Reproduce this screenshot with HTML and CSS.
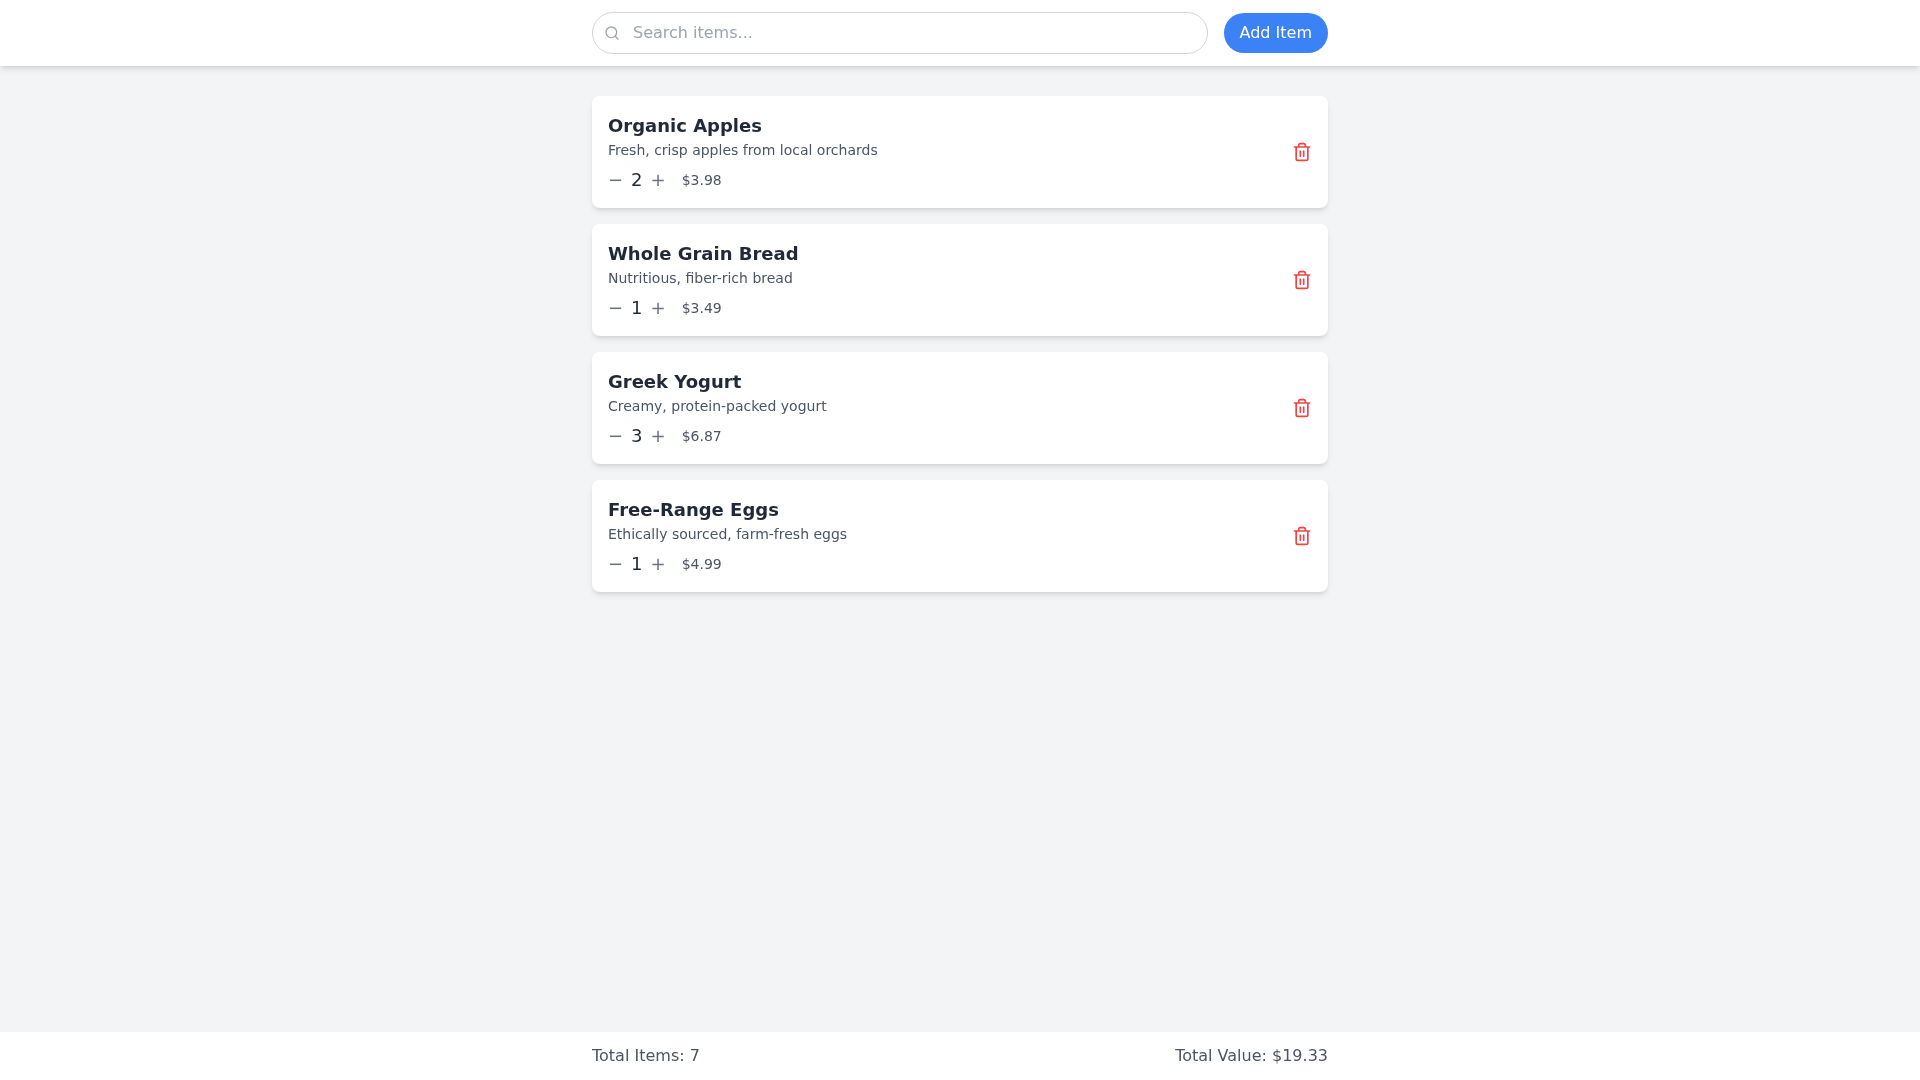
FILE: index.html
```html
<!DOCTYPE html>
<html lang="en">
<head>
    <meta charset="UTF-8">
    <meta name="viewport" content="width=device-width, initial-scale=1.0">
    <title>Inventory</title>
    <link rel="stylesheet" href="styles.css">
</head>
<body>
    <header class="top-bar">
        <div class="wrap top-bar-inner">
            <div class="search">
                <svg class="search-icon" viewBox="0 0 24 24" fill="none" stroke="currentColor" stroke-width="2" stroke-linecap="round" stroke-linejoin="round">
                    <circle cx="11" cy="11" r="8"/>
                    <path d="m21 21-4.3-4.3"/>
                </svg>
                <input class="search-input" type="text" placeholder="Search items...">
            </div>
            <button class="add-btn">Add Item</button>
        </div>
    </header>

    <main class="wrap item-list">
        <div class="item-card">
            <div class="item-info">
                <h2 class="item-name">Organic Apples</h2>
                <p class="item-desc">Fresh, crisp apples from local orchards</p>
                <div class="item-controls">
                    <button class="qty-btn">−</button>
                    <span class="qty">2</span>
                    <button class="qty-btn">+</button>
                    <span class="price">$3.98</span>
                </div>
            </div>
            <button class="delete-btn">
                <svg viewBox="0 0 24 24" fill="none" stroke="currentColor" stroke-width="2" stroke-linecap="round" stroke-linejoin="round">
                    <path d="M3 6h18M19 6v14c0 1-1 2-2 2H7c-1 0-2-1-2-2V6M8 6V4c0-1 1-2 2-2h4c1 0 2 1 2 2v2M10 11v6M14 11v6"/>
                </svg>
            </button>
        </div>

        <div class="item-card">
            <div class="item-info">
                <h2 class="item-name">Whole Grain Bread</h2>
                <p class="item-desc">Nutritious, fiber-rich bread</p>
                <div class="item-controls">
                    <button class="qty-btn">−</button>
                    <span class="qty">1</span>
                    <button class="qty-btn">+</button>
                    <span class="price">$3.49</span>
                </div>
            </div>
            <button class="delete-btn">
                <svg viewBox="0 0 24 24" fill="none" stroke="currentColor" stroke-width="2" stroke-linecap="round" stroke-linejoin="round">
                    <path d="M3 6h18M19 6v14c0 1-1 2-2 2H7c-1 0-2-1-2-2V6M8 6V4c0-1 1-2 2-2h4c1 0 2 1 2 2v2M10 11v6M14 11v6"/>
                </svg>
            </button>
        </div>

        <div class="item-card">
            <div class="item-info">
                <h2 class="item-name">Greek Yogurt</h2>
                <p class="item-desc">Creamy, protein-packed yogurt</p>
                <div class="item-controls">
                    <button class="qty-btn">−</button>
                    <span class="qty">3</span>
                    <button class="qty-btn">+</button>
                    <span class="price">$6.87</span>
                </div>
            </div>
            <button class="delete-btn">
                <svg viewBox="0 0 24 24" fill="none" stroke="currentColor" stroke-width="2" stroke-linecap="round" stroke-linejoin="round">
                    <path d="M3 6h18M19 6v14c0 1-1 2-2 2H7c-1 0-2-1-2-2V6M8 6V4c0-1 1-2 2-2h4c1 0 2 1 2 2v2M10 11v6M14 11v6"/>
                </svg>
            </button>
        </div>

        <div class="item-card">
            <div class="item-info">
                <h2 class="item-name">Free-Range Eggs</h2>
                <p class="item-desc">Ethically sourced, farm-fresh eggs</p>
                <div class="item-controls">
                    <button class="qty-btn">−</button>
                    <span class="qty">1</span>
                    <button class="qty-btn">+</button>
                    <span class="price">$4.99</span>
                </div>
            </div>
            <button class="delete-btn">
                <svg viewBox="0 0 24 24" fill="none" stroke="currentColor" stroke-width="2" stroke-linecap="round" stroke-linejoin="round">
                    <path d="M3 6h18M19 6v14c0 1-1 2-2 2H7c-1 0-2-1-2-2V6M8 6V4c0-1 1-2 2-2h4c1 0 2 1 2 2v2M10 11v6M14 11v6"/>
                </svg>
            </button>
        </div>
    </main>

    <footer class="summary">
        <div class="wrap summary-inner">
            <span>Total Items: 7</span>
            <span>Total Value: $19.33</span>
        </div>
    </footer>
</body>
</html>
```

FILE: styles.css
```css
* {
    box-sizing: border-box;
    margin: 0;
    padding: 0;
}
body {
    font-family: 'DejaVu Sans', sans-serif;
    font-size: 16px;
    line-height: 24px;
    background: #f3f4f6;
    min-height: 100vh;
    display: flex;
    flex-direction: column;
}
button {
    font-family: inherit;
    background: none;
    border: none;
    cursor: pointer;
}
.wrap {
    width: 736px;
    margin: 0 auto;
    will-change: transform;
}
.top-bar {
    background: white;
    padding: 12px 0;
    box-shadow: 0 4px 6px -1px rgba(0,0,0,0.1), 0 2px 4px -2px rgba(0,0,0,0.1);
}
.top-bar-inner {
    display: flex;
    align-items: center;
    gap: 16px;
}
.search {
    flex: 1;
    position: relative;
}
.search-icon {
    position: absolute;
    left: 12px;
    top: 13px;
    width: 16px;
    height: 16px;
    color: #9ca3af;
}
.search-input {
    display: block;
    width: 100%;
    font-family: inherit;
    font-size: 16px;
    line-height: 24px;
    padding: 8px 16px 8px 40px;
    border: 1px solid #d1d5db;
    border-radius: 9999px;
    outline: none;
    color: #1f2937;
}
.search-input::placeholder {
    color: #9ca3af;
}
.add-btn {
    background: #3b82f6;
    color: white;
    font-size: 16px;
    line-height: 24px;
    padding: 8px 16px;
    border-radius: 9999px;
}
.item-list {
    flex: 1;
    padding-top: 30px;
    display: flex;
    flex-direction: column;
    gap: 16px;
}
.item-card {
    background: white;
    border-radius: 8px;
    padding: 16px;
    display: flex;
    justify-content: space-between;
    align-items: center;
    box-shadow: 0 4px 6px -1px rgba(0,0,0,0.1), 0 2px 4px -2px rgba(0,0,0,0.1);
}
.item-name {
    font-size: 18px;
    line-height: 28px;
    font-weight: 600;
    color: #1f2937;
}
.item-desc {
    font-size: 14px;
    line-height: 20px;
    color: #4b5563;
}
.item-controls {
    display: flex;
    align-items: center;
    margin-top: 8px;
}
.qty-btn {
    font-size: 18px;
    line-height: 24px;
    color: #6b7280;
}
.qty {
    font-size: 18px;
    line-height: 24px;
    margin: 0 8px;
    color: #1f2937;
}
.price {
    font-size: 14px;
    line-height: 20px;
    margin-left: 16px;
    color: #4b5563;
}
.delete-btn {
    display: flex;
    color: #ef4444;
}
.delete-btn svg {
    width: 20px;
    height: 20px;
}
.summary {
    background: white;
    padding: 12px 0;
    color: #4b5563;
}
.summary-inner {
    display: flex;
    justify-content: space-between;
}
```
